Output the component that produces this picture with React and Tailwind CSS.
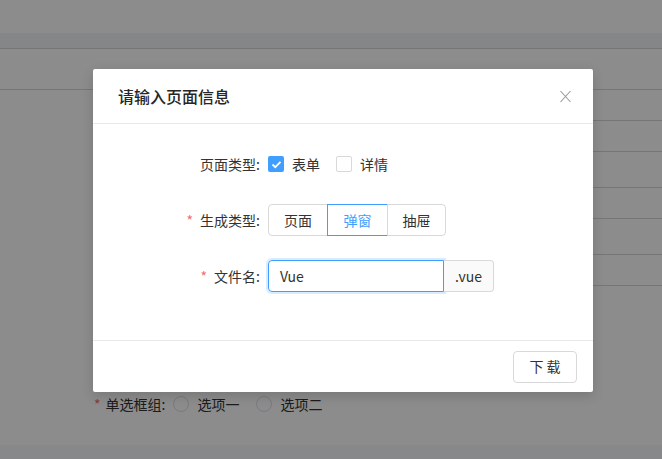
import React from "react";

const font = { fontFamily: '"Noto Sans CJK SC", "Noto Sans", sans-serif' };

function Label({ required, children }) {
  return (
    <div className="w-[151px] shrink-0 pr-[8px] text-right text-[14px] text-[#333]">
      {required && <span className="mr-[7px] text-[#f56c6c]">*</span>}
      {children}:
    </div>
  );
}

function Check({ checked, children }) {
  return (
    <label className="mr-[16px] flex items-center">
      {checked ? (
        <span className="flex h-[16px] w-[16px] items-center justify-center rounded-[2px] bg-[#409eff]">
          <svg width="11" height="9" viewBox="0 0 11 9">
            <path d="M1.5 4.5 L4.3 7.2 L9.5 1.8" fill="none" stroke="#fff" strokeWidth="1.8" />
          </svg>
        </span>
      ) : (
        <span className="h-[16px] w-[16px] rounded-[2px] border border-[#d9d9d9] bg-white" />
      )}
      <span className="ml-[8px] text-[14px] text-[#333]">{children}</span>
    </label>
  );
}

export default function App() {
  return (
    <div className="relative h-[459px] w-[662px] overflow-hidden bg-white" style={font}>
      {/* page behind the mask */}
      <div className="h-[33px] bg-white" />
      <div className="h-[16px] border-b border-[#d8d8d8] bg-[#f2f4f7]" />
      <div className="h-[41px] border-b border-[#d8d8d8]" />
      <div className="ml-[420px]">
        <div className="h-[31px] border-b border-[#d8d8d8]" />
        <div className="h-[31px] border-b border-[#d8d8d8]" />
        <div className="h-[36px] border-b border-[#d8d8d8]" />
        <div className="h-[31px] border-b border-[#d8d8d8]" />
        <div className="h-[36px] border-b border-[#d8d8d8]" />
        <div className="h-[31px] border-b border-[#d8d8d8]" />
      </div>
      <div className="h-[102px]" />
      <div className="flex h-[32px] items-center pl-[94px] text-[14px] text-[#333]">
        <span className="mr-[5px] text-[#f56c6c]">*</span>
        <span>单选框组:</span>
        <span className="ml-[8px] h-[16px] w-[16px] rounded-full border border-[#dcdfe6]" />
        <span className="ml-[8px]">选项一</span>
        <span className="ml-[17px] h-[16px] w-[16px] rounded-full border border-[#dcdfe6]" />
        <span className="ml-[8px]">选项二</span>
      </div>
      <div className="h-[25px]" />
      <div className="h-[20px] bg-[#f5f7fb]" />

      {/* mask */}
      <div className="absolute inset-0 bg-black/45" />

      {/* dialog */}
      <div className="absolute left-[93px] top-[69px] w-[500px] rounded-[2px] bg-white shadow-[0_4px_12px_rgba(0,0,0,0.15)]">
        <div className="flex h-[55px] items-center justify-between border-b border-[#e8e8e8] pl-[25px] pr-[21px]">
          <div className="text-[16px] font-medium text-[#262626]">请输入页面信息</div>
          <svg width="13" height="13" viewBox="0 0 13 13">
            <path d="M1.5 1 L11.5 12 M11.5 1 L1.5 12" stroke="#999" strokeWidth="1.1" />
          </svg>
        </div>

        <div className="px-[24px] pb-[24px] pt-[24px]">
          <div className="mb-[24px] flex h-[32px] items-center">
            <Label>页面类型</Label>
            <Check checked>表单</Check>
            <Check>详情</Check>
          </div>

          <div className="mb-[24px] flex h-[32px] items-center">
            <Label required>生成类型</Label>
            <div className="flex text-[14px]">
              <div className="flex h-[32px] w-[60px] items-center justify-center rounded-l-[4px] border border-[#d9d9d9] text-[#333]">页面</div>
              <div className="-ml-px flex h-[32px] w-[61px] items-center justify-center border border-[#409eff] text-[#409eff]">弹窗</div>
              <div className="-ml-px flex h-[32px] w-[59px] items-center justify-center rounded-r-[4px] border border-[#d9d9d9] text-[#333]">抽屉</div>
            </div>
          </div>

          <div className="mb-[24px] flex h-[32px] items-center">
            <Label required>文件名</Label>
            <div className="flex text-[14px]">
              <div className="flex h-[32px] w-[176px] items-center rounded-l-[4px] border border-[#409eff] pl-[11px] text-[#333] shadow-[0_0_0_2px_rgba(64,158,255,0.2)]">
                Vue
              </div>
              <div className="flex h-[32px] w-[50px] items-center justify-center rounded-r-[4px] border border-l-0 border-[#d9d9d9] bg-[#fafafa] text-[#333]">
                .vue
              </div>
            </div>
          </div>
        </div>

        <div className="flex h-[52px] items-center justify-end border-t border-[#e8e8e8] pr-[16px]">
          <div className="flex h-[32px] w-[64px] items-center justify-center rounded-[4px] border border-[#d9d9d9] text-[14px] text-[#333]">
            下 载
          </div>
        </div>
      </div>
    </div>
  );
}
